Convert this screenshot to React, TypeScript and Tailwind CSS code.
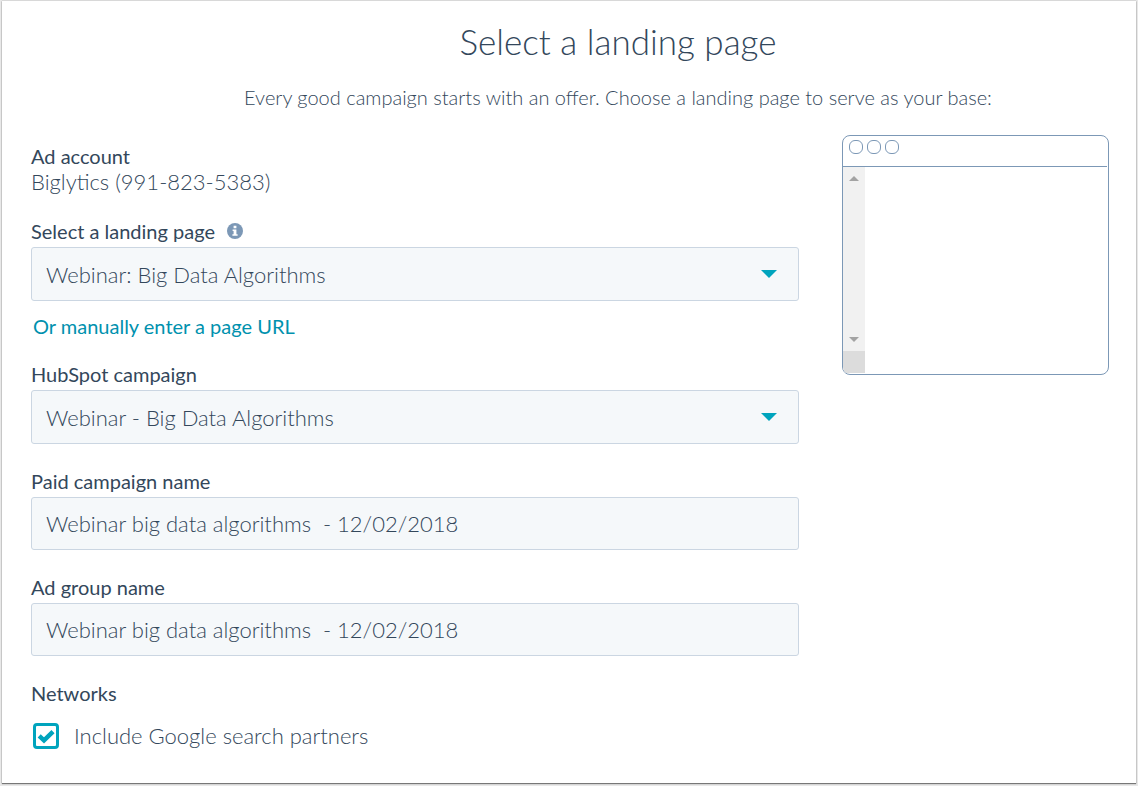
import { useState } from 'react';
import type { ReactNode } from 'react';

const CONTROL =
  'block w-full rounded-[3px] border border-[#cbd6e2] bg-[#f5f8fa] px-[14px] text-[22px] font-light text-[#33475b] outline-none focus:border-[#00a4bd]';

function Label({ htmlFor, children }: { htmlFor: string; children: ReactNode }) {
  return (
    <label htmlFor={htmlFor} className="block text-[20px] leading-6 text-[#33475b]">
      {children}
    </label>
  );
}

function SelectBox({ id, value }: { id: string; value: string }) {
  return (
    <div className="relative mt-1">
      <select id={id} defaultValue={value} className={`${CONTROL} h-[54px] appearance-none pr-12`}>
        <option>{value}</option>
      </select>
      <svg
        className="pointer-events-none absolute top-[23px] right-[22px]"
        width="16"
        height="8"
        viewBox="0 0 16 8"
        aria-hidden="true"
      >
        <path d="M0 0h16L8 8z" fill="#00a4bd" />
      </svg>
    </div>
  );
}

function TextField({ id, label, value }: { id: string; label: string; value: string }) {
  return (
    <div className="mt-[25px]">
      <Label htmlFor={id}>{label}</Label>
      <input id={id} type="text" defaultValue={value} className={`${CONTROL} mt-1 h-[53px]`} />
    </div>
  );
}

function InfoIcon() {
  return (
    <svg width="16" height="16" viewBox="0 0 16 16" aria-hidden="true">
      <circle cx="8" cy="8" r="8" fill="#7c98b6" />
      <path d="M6.6 2.8h2.8v2.4H6.6zM5.6 6.4h3.8v4.8h1.2v1.6H5.4v-1.6h1.2V8h-1z" fill="#fff" />
    </svg>
  );
}

function PagePreview() {
  return (
    <div className="flex h-60 w-full flex-col overflow-hidden rounded-lg border border-[#7c98b6]">
      <div className="mr-px flex h-[31px] shrink-0 gap-1 border-b border-[#7c98b6] pt-1 pl-[6px]">
        <span className="size-[14px] rounded-[6px] border border-[#7c98b6]" />
        <span className="size-[14px] rounded-[6px] border border-[#7c98b6]" />
        <span className="size-[14px] rounded-[6px] border border-[#7c98b6]" />
      </div>
      {/* Scrollbar */}
      <div className="mb-px flex w-[22px] flex-1 flex-col bg-[#f1f1f1]">
        <div className="flex flex-1 flex-col items-center justify-between pt-[9px] pb-[9px]">
          <svg width="10" height="5" viewBox="0 0 10 5" aria-hidden="true">
            <path d="M0 5h10L5 0z" fill="#a3a3a3" />
          </svg>
          <svg width="10" height="5" viewBox="0 0 10 5" aria-hidden="true">
            <path d="M0 0h10L5 5z" fill="#a3a3a3" />
          </svg>
        </div>
        <div className="h-[22px] bg-[#dcdcdc]" />
      </div>
    </div>
  );
}

export default function App() {
  const [partners, setPartners] = useState(true);

  return (
    <div className="bg-[#e8e8e8] px-[2px] pt-px pb-[3px] font-['Lato',sans-serif] text-[#33475b]">
      <main className="bg-white pr-[27px] pb-[33px] pl-[29px] shadow-[0_1px_1px_#777,0_0_1px_#888]">
        <header className="pt-[18px] pl-24 text-center">
          <h1 className="text-[35px] leading-[44px] font-light">Select a landing page</h1>
          <p className="mt-[22px] text-[20px] leading-6 font-light">
            Every good campaign starts with an offer. Choose a landing page to serve as your base:
          </p>
        </header>

        <div className="mt-[26px] grid grid-cols-[minmax(0,1fr)_267px] gap-[43px]">
          <form className="mt-[9px]" onSubmit={(e) => e.preventDefault()}>
            <div>
              <div className="text-[20px] leading-6">Ad account</div>
              <div className="text-[22px] leading-7 font-light">Biglytics (991-823-5383)</div>
            </div>

            <div className="mt-[23px]">
              <div className="flex items-center gap-3">
                <Label htmlFor="landing-page">Select a landing page</Label>
                <InfoIcon />
              </div>
              <SelectBox id="landing-page" value="Webinar: Big Data Algorithms" />
              <a href="#url" className="mt-[13px] ml-[2px] block w-fit text-[20px] leading-6 text-[#0091ae] hover:underline">
                Or manually enter a page URL
              </a>
            </div>

            <div className="mt-6">
              <Label htmlFor="campaign">HubSpot campaign</Label>
              <SelectBox id="campaign" value="Webinar - Big Data Algorithms" />
            </div>

            <TextField id="paid-name" label="Paid campaign name" value="Webinar big data algorithms  - 12/02/2018" />
            <TextField id="group-name" label="Ad group name" value="Webinar big data algorithms  - 12/02/2018" />

            {/* Networks */}
            <fieldset className="mt-[25px]">
              <legend className="text-[20px] leading-6">Networks</legend>
              <label className="mt-[17px] ml-[2px] flex w-fit items-center gap-[15px] text-[22px] leading-7 font-light">
                <span className="relative size-[26px]">
                  <input
                    type="checkbox"
                    checked={partners}
                    onChange={(e) => setPartners(e.target.checked)}
                    className="peer block size-[26px] appearance-none rounded-[4px] border-3 border-[#00a4bd] bg-white"
                  />
                  <svg
                    className="pointer-events-none absolute inset-0 hidden peer-checked:block"
                    width="26"
                    height="26"
                    viewBox="0 0 26 26"
                    aria-hidden="true"
                  >
                    <path d="M6.2 12.8l4.8 4.6 9-8.8" fill="none" stroke="#00a4bd" strokeWidth="4.4" />
                  </svg>
                </span>
                Include Google search partners
              </label>
            </fieldset>
          </form>

          <PagePreview />
        </div>
      </main>
    </div>
  );
}
